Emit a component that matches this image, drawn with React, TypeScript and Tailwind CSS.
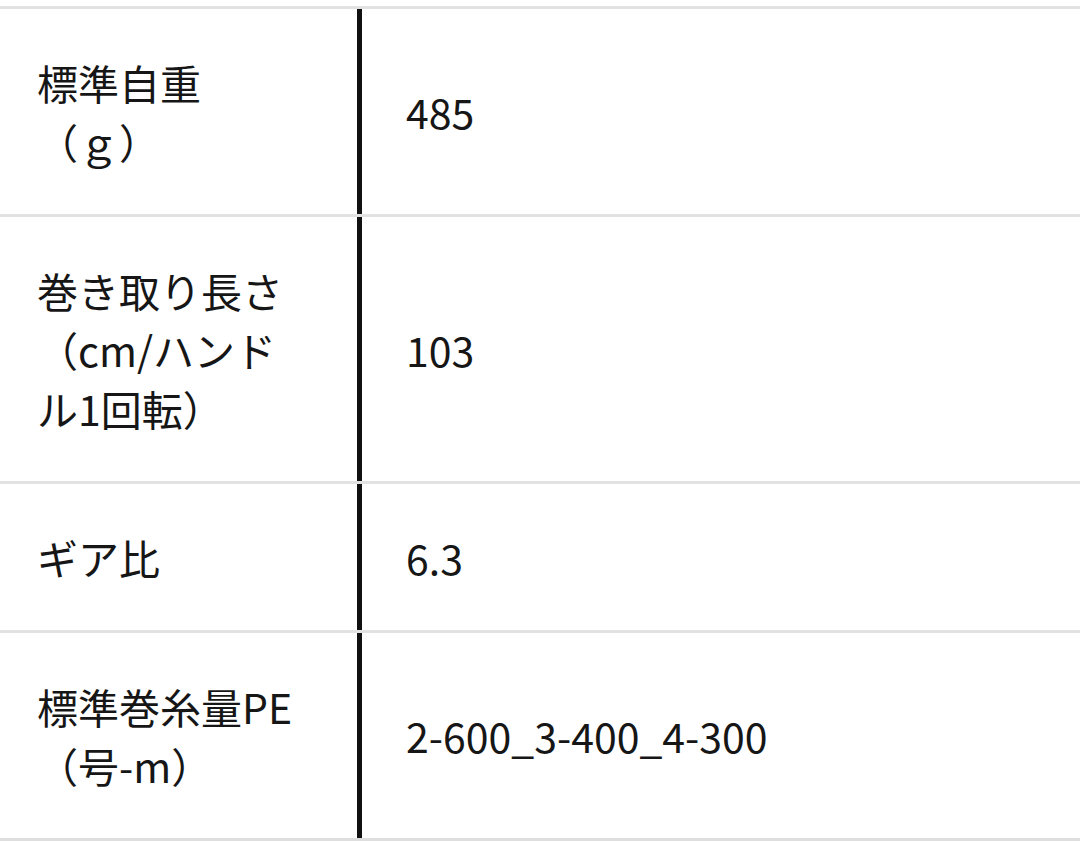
import React from "react";

const rows: { label: string; value: string }[] = [
  { label: "標準自重（ｇ）", value: "485" },
  { label: "巻き取り長さ（cm/ハンドル1回転）", value: "103" },
  { label: "ギア比", value: "6.3" },
  { label: "標準巻糸量PE（号-m）", value: "2-600_3-400_4-300" },
];

export default function App() {
  return (
    <div
      className="w-[1080px] h-[841px] bg-white pt-[6px] text-[#161616] overflow-hidden"
      style={{ fontFamily: '"Noto Sans CJK JP", "Noto Sans", sans-serif' }}
    >
      <div className="border-b-[3px] border-[#dedede]">
        {rows.map((r, i) => (
          <div key={i} className="flex border-t-[3px] border-[#e2e2e2]">
            <div className="w-[362px] shrink-0 border-r-[5px] border-[#111] pl-[37px] pr-[58px] pt-[44px] pb-[43px] text-[41px] leading-[59px]">
              {r.label}
            </div>
            <div className="flex-1 flex items-center pl-[44px] text-[41px] leading-[59px]">
              {r.value}
            </div>
          </div>
        ))}
      </div>
    </div>
  );
}
